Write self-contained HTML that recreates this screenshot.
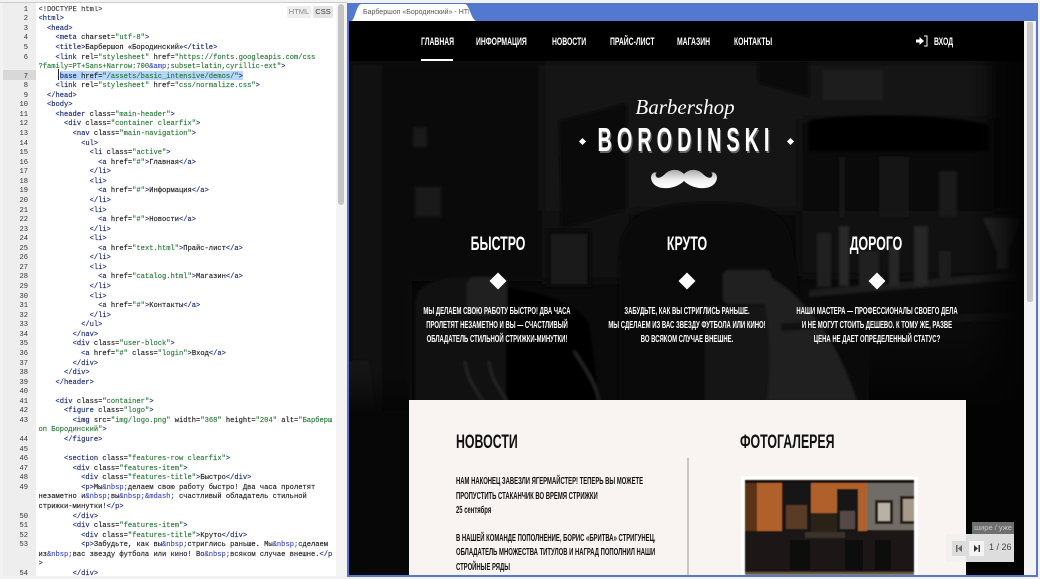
<!DOCTYPE html>
<html lang="ru"><head><meta charset="utf-8"><title>Барбершоп</title>
<style>
html,body{margin:0;padding:0;width:1040px;height:579px;overflow:hidden;background:#f2f2f2}
body{position:relative;font-family:"Liberation Sans",sans-serif}
div,pre,svg{position:absolute}
pre{margin:0;font:7.1px/9.57px "Liberation Mono","DejaVu Sans Mono",monospace;color:#222;-webkit-text-stroke:.15px #222}
pre i{font-style:normal;color:#1b2a78;-webkit-text-stroke:.15px #1b2a78}
pre b{font-weight:normal;color:#2c7a3c;-webkit-text-stroke:.15px #2c7a3c}
pre u{text-decoration:none;color:#4550c0;-webkit-text-stroke:.15px #4550c0}
.t{white-space:nowrap;color:#fff;font-weight:bold;transform-origin:0 50%}
.c{transform-origin:50% 50%}
.nav{top:36px;font-size:11px;line-height:13px;transform:scaleX(.62)}
.h{top:234px;font-size:19px;line-height:22px;transform:translateX(-50%) scaleX(.65)}
.p{font-size:10px;line-height:14px;transform:translateX(-50%) scaleX(.595)}
.d{width:12px;height:12px;background:#fff;transform:rotate(45deg);top:275px}
.n{left:456px;color:#111;font-size:10px;line-height:14px;transform:scaleX(.59)}
.g{font-size:19px;line-height:22px;color:#111;top:432px;transform:scaleX(.65)}
</style></head><body>

<div style="left:3px;top:3px;width:342px;height:573px;background:#fff"></div>
<div style="left:3px;top:3px;width:33px;height:573px;background:#eeeeee"></div>
<div style="left:0;top:2px;width:347px;height:1px;background:#ccc"></div>
<div style="left:3px;top:70px;width:33px;height:9.5px;background:#d8d8d8"></div>
<div style="left:60px;top:70.5px;width:183px;height:9.5px;background:#b6d6fb"></div>
<div style="left:58px;top:69px;width:1px;height:11px;background:#222"></div>
<div style="left:336px;top:3px;width:10px;height:573px;background:#f4f4f4"></div>
<div style="left:338px;top:4px;width:6px;height:201px;background:#c4c4c4;border-radius:3px"></div>
<div style="left:287px;top:6px;width:24px;height:12px;background:#eee;border-radius:2px;color:#888;font:7.5px/12px 'Liberation Sans',sans-serif;text-align:center">HTML</div>
<div style="left:313px;top:6px;width:20px;height:12px;background:#e4e4e4;border-radius:2px;color:#333;font:7.5px/12px 'Liberation Sans',sans-serif;text-align:center">CSS</div>

<pre style="left:4px;top:5.7px;width:24px;text-align:right;color:#333;-webkit-text-stroke:0">1
2
3
4
5
6

7
8
9
10
11
12
13
14
15
16
17
18
19
20
21
22
23
24
25
26
27
28
29
30
31
32
33
34
35
36
37
38
39
40
41
42
43

44
45
46
47
48
49


50
51
52
53


54</pre>

<pre style="left:38.5px;top:5.7px;height:570px;overflow:hidden"><span style="color:#555">&lt;!DOCTYPE html&gt;</span>
<i>&lt;html&gt;</i>
  <i>&lt;head&gt;</i>
    <i>&lt;meta</i> charset=<b>"utf-8"</b><i>&gt;</i>
    <i>&lt;title&gt;</i>Барбершоп «Бородинский»<i>&lt;/title&gt;</i>
    <i>&lt;link</i> rel=<b>"stylesheet"</b> href=<b>"https://fonts.googleapis.com/css</b>
<b>?family=PT+Sans+Narrow:700</b><u>&amp;amp;</u><b>subset=latin,cyrillic-ext"</b><i>&gt;</i>
    <i> base</i> href=<b>"/assets/basic_intensive/demos/"</b><i>&gt;</i>
    <i>&lt;link</i> rel=<b>"stylesheet"</b> href=<b>"css/normalize.css"</b><i>&gt;</i>
  <i>&lt;/head&gt;</i>
  <i>&lt;body&gt;</i>
    <i>&lt;header</i> class=<b>"main-header"</b><i>&gt;</i>
      <i>&lt;div</i> class=<b>"container clearfix"</b><i>&gt;</i>
        <i>&lt;nav</i> class=<b>"main-navigation"</b><i>&gt;</i>
          <i>&lt;ul&gt;</i>
            <i>&lt;li</i> class=<b>"active"</b><i>&gt;</i>
              <i>&lt;a</i> href=<b>"#"</b><i>&gt;</i>Главная<i>&lt;/a&gt;</i>
            <i>&lt;/li&gt;</i>
            <i>&lt;li&gt;</i>
              <i>&lt;a</i> href=<b>"#"</b><i>&gt;</i>Информация<i>&lt;/a&gt;</i>
            <i>&lt;/li&gt;</i>
            <i>&lt;li&gt;</i>
              <i>&lt;a</i> href=<b>"#"</b><i>&gt;</i>Новости<i>&lt;/a&gt;</i>
            <i>&lt;/li&gt;</i>
            <i>&lt;li&gt;</i>
              <i>&lt;a</i> href=<b>"text.html"</b><i>&gt;</i>Прайс-лист<i>&lt;/a&gt;</i>
            <i>&lt;/li&gt;</i>
            <i>&lt;li&gt;</i>
              <i>&lt;a</i> href=<b>"catalog.html"</b><i>&gt;</i>Магазин<i>&lt;/a&gt;</i>
            <i>&lt;/li&gt;</i>
            <i>&lt;li&gt;</i>
              <i>&lt;a</i> href=<b>"#"</b><i>&gt;</i>Контакты<i>&lt;/a&gt;</i>
            <i>&lt;/li&gt;</i>
          <i>&lt;/ul&gt;</i>
        <i>&lt;/nav&gt;</i>
        <i>&lt;div</i> class=<b>"user-block"</b><i>&gt;</i>
          <i>&lt;a</i> href=<b>"#"</b> class=<b>"login"</b><i>&gt;</i>Вход<i>&lt;/a&gt;</i>
        <i>&lt;/div&gt;</i>
      <i>&lt;/div&gt;</i>
    <i>&lt;/header&gt;</i>

    <i>&lt;div</i> class=<b>"container"</b><i>&gt;</i>
      <i>&lt;figure</i> class=<b>"logo"</b><i>&gt;</i>
        <i>&lt;img</i> src=<b>"img/logo.png"</b> width=<b>"368"</b> height=<b>"204"</b> alt=<b>"Барберш</b>
<b>оп Бородинский"</b><i>&gt;</i>
      <i>&lt;/figure&gt;</i>

      <i>&lt;section</i> class=<b>"features-row clearfix"</b><i>&gt;</i>
        <i>&lt;div</i> class=<b>"features-item"</b><i>&gt;</i>
          <i>&lt;div</i> class=<b>"features-title"</b><i>&gt;</i>Быстро<i>&lt;/div&gt;</i>
          <i>&lt;p&gt;</i>Мы<u>&amp;nbsp;</u>делаем свою работу быстро! Два часа пролетят
незаметно и<u>&amp;nbsp;</u>вы<u>&amp;nbsp;</u><u>&amp;mdash;</u> счастливый обладатель стильной
стрижки-минутки!<i>&lt;/p&gt;</i>
        <i>&lt;/div&gt;</i>
        <i>&lt;div</i> class=<b>"features-item"</b><i>&gt;</i>
          <i>&lt;div</i> class=<b>"features-title"</b><i>&gt;</i>Круто<i>&lt;/div&gt;</i>
          <i>&lt;p&gt;</i>Забудьте, как вы<u>&amp;nbsp;</u>стриглись раньше. Мы<u>&amp;nbsp;</u>сделаем
из<u>&amp;nbsp;</u>вас звезду футбола или кино! Во<u>&amp;nbsp;</u>всяком случае внешне.<i>&lt;/p</i>
<i>&gt;</i>
        <i>&lt;/div&gt;</i></pre>

<div style="left:347px;top:3px;width:691px;height:573px;background:#fff"></div>
<div style="left:348px;top:3px;width:690px;height:18px;background:#5278cf"></div>
<div style="left:347px;top:3px;width:2px;height:574px;background:#5278cf"></div>
<div style="left:1036px;top:3px;width:2px;height:574px;background:#5278cf"></div>
<div style="left:347px;top:575px;width:691px;height:2px;background:#5278cf"></div>
<svg style="left:351px;top:4px" width="126" height="17" viewBox="0 0 126 17"><path d="M0 17 C4 17 5 1 10 0 H114 C119 1 120 17 126 17Z" fill="#fff"/></svg>
<div style="left:363px;top:7px;width:106px;height:11px;overflow:hidden;white-space:nowrap;font:7px/11px 'Liberation Sans',sans-serif;color:#555">Барбершоп «Бородинский» - HTML</div>
<div style="left:1024px;top:21px;width:12px;height:554px;background:#f3f3f3"></div>
<div style="left:1027px;top:22px;width:6px;height:280px;background:#c8c8c8;border-radius:2px"></div>

<div style="left:349px;top:21px;width:675px;height:554px;background:#000;overflow:hidden">
<svg style="left:0;top:40px" width="675" height="514" viewBox="0 0 675 514">
<defs>
<filter id="f1"><feGaussianBlur stdDeviation="1.2"/></filter>
<filter id="f2"><feGaussianBlur stdDeviation="5"/></filter>
<linearGradient id="fade" x1="0" x2="1"><stop offset="0" stop-color="#030303" stop-opacity="0"/><stop offset="1" stop-color="#030303"/></linearGradient>
<linearGradient id="fadeV" x1="0" x2="0" y1="0" y2="1"><stop offset="0" stop-color="#030303" stop-opacity="0"/><stop offset="1" stop-color="#030303"/></linearGradient>
</defs>
<rect width="675" height="514" fill="#0d0d0d"/>
<g filter="url(#f2)">
<rect x="0" y="0" width="33" height="514" fill="#191919"/>
<rect x="33" y="0" width="30" height="514" fill="#070707"/>
<rect x="63" y="0" width="130" height="220" fill="#101010"/>
<rect x="193" y="0" width="450" height="150" fill="#1a1a1a"/>
<rect x="193" y="150" width="90" height="70" fill="#191919"/>
<rect x="450" y="58" width="195" height="100" fill="#0e0e0e"/>
<rect x="450" y="150" width="225" height="65" fill="#151515"/>
</g>
<g filter="url(#f1)">
<path d="M409 0H460V36L409 22Z" fill="#080808"/>
<rect x="474" y="9" width="60" height="30" fill="#262626"/>
<path d="M210 60L278 42V148L212 167Z" fill="#0a0a0a"/>
<rect x="198" y="169" width="44" height="57" fill="#0a0a0a"/>
<rect x="202" y="173" width="36" height="50" fill="#242424"/>
<path d="M66 126h26v30H66zM64 66h14v20H64z" fill="#222"/>
<path d="M460 60C480 52 620 52 640 66V90H460Z" fill="#060606"/>
<rect x="490" y="96" width="6" height="60" fill="#1e1e1e"/><rect x="530" y="96" width="30" height="60" fill="#1b1b1b"/><rect x="590" y="110" width="18" height="46" fill="#202020"/>
<path d="M270 340V200C270 160 290 146 340 142C390 140 430 142 440 170C450 200 452 260 452 340Z" fill="#070707"/>
<path d="M66 340V245C66 222 90 216 120 216H157V340Z" fill="#181818"/>
<path d="M157 226C190 232 225 240 240 262L250 340H157Z" fill="#060606"/>
<rect x="118" y="216" width="40" height="38" rx="8" fill="#292929"/>
<path d="M116 300C118 320 128 330 134 340M140 300C142 320 152 330 158 340M225 290C238 310 248 325 250 340" fill="none" stroke="#333" stroke-width="2.5"/>
<rect x="356" y="245" width="70" height="95" fill="#1e1e1e"/>
<path d="M410 212C450 225 490 280 508 340H418C424 300 420 250 410 212Z" fill="#2a2a2a"/>
<rect x="374" y="209" width="48" height="34" rx="6" fill="#2c2c2c"/>
<path d="M460 229L677 210V218L460 236Z" fill="#282828"/>
<path d="M432 262L677 250V258L432 270Z" fill="#161616"/>
<rect x="468" y="172" width="14" height="54" fill="#2a2a2a"/><rect x="490" y="165" width="10" height="60" fill="#363636"/><rect x="510" y="190" width="20" height="35" fill="#2a2a2a"/><rect x="540" y="185" width="10" height="40" fill="#303030"/><rect x="565" y="165" width="14" height="60" fill="#303030"/><rect x="590" y="190" width="12" height="32" fill="#262626"/>
<path d="M634 157H672L660 190V208H648V190Z" fill="#3a3a3a"/>
<path d="M0 300H20L32 400H0Z" fill="#1a1a1a"/>
</g>
<rect width="675" height="514" fill="#000" opacity=".22"/>
<rect x="620" width="55" height="514" fill="url(#fade)"/>
<rect x="520" y="270" width="155" height="80" fill="url(#fadeV)"/>
<rect x="520" y="350" width="155" height="164" fill="#030303"/>
<rect x="0" y="310" width="60" height="40" fill="url(#fadeV)" opacity=".7"/>
<rect x="0" y="350" width="60" height="164" fill="#070707"/>
</svg>
<div style="left:0;top:0;width:675px;height:40px;background:#000"></div>
</div>

<div class="t nav" style="left:421px">ГЛАВНАЯ</div>
<div class="t nav" style="left:476px">ИНФОРМАЦИЯ</div>
<div class="t nav" style="left:552px">НОВОСТИ</div>
<div class="t nav" style="left:610px">ПРАЙС-ЛИСТ</div>
<div class="t nav" style="left:677px">МАГАЗИН</div>
<div class="t nav" style="left:734px">КОНТАКТЫ</div>
<div style="left:421px;top:59px;width:32px;height:2px;background:#fff"></div>
<svg style="left:915px;top:35px" width="13" height="12" viewBox="0 0 13 12"><path d="M1 4.5H4.5V2L9 6 4.5 10V7.5H1Z" fill="#fff"/><path d="M9 1H12V11H9" fill="none" stroke="#fff" stroke-width="1"/></svg>
<div class="t nav" style="left:934px">ВХОД</div>

<div class="t c" style="left:685px;top:95px;transform:translateX(-50%);font:italic 21px/24px 'Liberation Serif',serif;color:#fff">Barbershop</div>
<div class="t c" style="left:686px;top:122px;transform:translateX(-50%) scaleX(.6);font:bold 33px/36px 'Liberation Sans',sans-serif;letter-spacing:8.4px;text-shadow:2px 2px 0 #666">BORODINSKI</div>
<div style="left:579.5px;top:138.5px;width:5px;height:5px;background:#fff;transform:rotate(45deg)"></div>
<div style="left:787.5px;top:138.5px;width:5px;height:5px;background:#fff;transform:rotate(45deg)"></div>
<svg style="left:650px;top:168px" width="68" height="22" viewBox="0 0 68 22"><defs><linearGradient id="m" x1="0" y1="0" x2="0" y2="1"><stop offset="0" stop-color="#aaa"/><stop offset=".55" stop-color="#f0f0f0"/><stop offset="1" stop-color="#fff"/></linearGradient></defs><path d="M34 6C28 0 20 1 15 6 11 10 7 11 6 8 5 6 6 5 7 5 4 3 1 6 1 10 2 18 10 21 19 20 26 19 31 16 34 13 37 16 42 19 49 20 58 21 66 18 67 10 67 6 64 3 61 5 62 5 63 6 62 8 61 11 57 10 53 6 48 1 40 0 34 6Z" fill="url(#m)"/></svg>

<div class="t h c" style="left:497.5px">БЫСТРО</div>
<div class="t h c" style="left:687px">КРУТО</div>
<div class="t h c" style="left:876px">ДОРОГО</div>
<div class="d" style="left:492px"></div>
<div class="d" style="left:681px"></div>
<div class="d" style="left:871px"></div>

<div class="t p c" style="left:497px;top:305px">МЫ ДЕЛАЕМ СВОЮ РАБОТУ БЫСТРО! ДВА ЧАСА</div>
<div class="t p c" style="left:497px;top:319px">ПРОЛЕТЯТ НЕЗАМЕТНО И ВЫ — СЧАСТЛИВЫЙ</div>
<div class="t p c" style="left:497px;top:333px">ОБЛАДАТЕЛЬ СТИЛЬНОЙ СТРИЖКИ-МИНУТКИ!</div>
<div class="t p c" style="left:687px;top:305px">ЗАБУДЬТЕ, КАК ВЫ СТРИГЛИСЬ РАНЬШЕ.</div>
<div class="t p c" style="left:687px;top:319px">МЫ СДЕЛАЕМ ИЗ ВАС ЗВЕЗДУ ФУТБОЛА ИЛИ КИНО!</div>
<div class="t p c" style="left:687px;top:333px">ВО ВСЯКОМ СЛУЧАЕ ВНЕШНЕ.</div>
<div class="t p c" style="left:877px;top:305px">НАШИ МАСТЕРА — ПРОФЕССИОНАЛЫ СВОЕГО ДЕЛА</div>
<div class="t p c" style="left:877px;top:319px">И НЕ МОГУТ СТОИТЬ ДЕШЕВО. К ТОМУ ЖЕ, РАЗВЕ</div>
<div class="t p c" style="left:877px;top:333px">ЦЕНА НЕ ДАЕТ ОПРЕДЕЛЕННЫЙ СТАТУС?</div>

<div style="left:409px;top:400px;width:557px;height:175px;background:#f9f4f2"></div>
<div style="left:687px;top:458px;width:2px;height:117px;background:#c9c6c4"></div>
<div class="t g" style="left:456px">НОВОСТИ</div>
<div class="t g" style="left:740px">ФОТОГАЛЕРЕЯ</div>
<div class="t n" style="top:475px">НАМ НАКОНЕЦ ЗАВЕЗЛИ ЯГЕРМАЙСТЕР! ТЕПЕРЬ ВЫ МОЖЕТЕ</div>
<div class="t n" style="top:490px">ПРОПУСТИТЬ СТАКАНЧИК ВО ВРЕМЯ СТРИЖКИ</div>
<div class="t n" style="top:504px">25 сентября</div>
<div class="t n" style="top:532px">В НАШЕЙ КОМАНДЕ ПОПОЛНЕНИЕ, БОРИС «БРИТВА» СТРИГУНЕЦ,</div>
<div class="t n" style="top:546px">ОБЛАДАТЕЛЬ МНОЖЕСТВА ТИТУЛОВ И НАГРАД ПОПОЛНИЛ НАШИ</div>
<div class="t n" style="top:561px">СТРОЙНЫЕ РЯДЫ</div>

<svg style="left:741px;top:476px" width="177" height="99" viewBox="0 0 177 99">
<defs><filter id="f3"><feGaussianBlur stdDeviation=".5"/></filter></defs>
<rect width="177" height="99" fill="#fff"/>
<g transform="translate(4 4)" filter="url(#f3)">
<rect width="169" height="95" fill="#1c1511"/>
<rect y="0" width="169" height="3" fill="#17110c"/>
<rect x="0" y="3" width="122" height="48" fill="#b0602a"/>
<rect x="0" y="3" width="12" height="48" fill="#5a3018"/>
<rect x="122" y="3" width="47" height="47" fill="#6f6c68"/>
<rect x="37" y="3" width="29" height="49" fill="#181818"/>
<rect x="41" y="25" width="21" height="24" fill="#5a3a28"/>
<rect x="92" y="9" width="21" height="43" fill="#181818"/>
<rect x="95" y="31" width="15" height="18" fill="#544a44"/>
<rect x="66" y="33" width="26" height="19" fill="#2c2119"/>
<rect x="130" y="20" width="18" height="24" fill="#2a1d16"/>
<rect x="133" y="23" width="12" height="18" fill="#b9b1a4"/>
<rect x="155" y="16" width="14" height="28" fill="#2a1d16"/>
<rect x="158" y="19" width="11" height="22" fill="#a89a88"/>
<rect x="0" y="52" width="169" height="43" fill="#1e1712"/>
<path d="M45 60h20v30H45zM100 60h18v30h-18zM130 60h16v30h-16z" fill="#0c0a08"/>
<rect x="60" y="52" width="40" height="6" fill="#3a3029"/>
<rect x="0" y="92" width="169" height="3" fill="#6d5a40"/>
</g>
</svg>

<div style="left:972px;top:522px;width:42px;height:12px;background:#6f6f6f;color:#c9c9c9;font:7.5px/12px 'Liberation Sans',sans-serif;text-align:center">шире / уже</div>
<div style="left:946px;top:534px;width:68px;height:28px;background:rgba(240,240,240,.92)"></div>
<div style="left:952px;top:541px;width:14px;height:15px;background:#dcdcdc"></div>
<div style="left:969px;top:541px;width:15px;height:15px;background:#f4f4f4"></div>
<svg style="left:955px;top:544px" width="8" height="9" viewBox="0 0 8 9"><path d="M1 1H2.5V8H1ZM7 1V8L3 4.5Z" fill="#666"/></svg>
<svg style="left:973px;top:544px" width="8" height="9" viewBox="0 0 8 9"><path d="M7 1H5.5V8H7ZM1 1V8L5 4.5Z" fill="#333"/></svg>
<div style="left:989px;top:541px;font:9px/12px 'Liberation Sans',sans-serif;color:#444;white-space:nowrap">1 / 26</div>
</body></html>
